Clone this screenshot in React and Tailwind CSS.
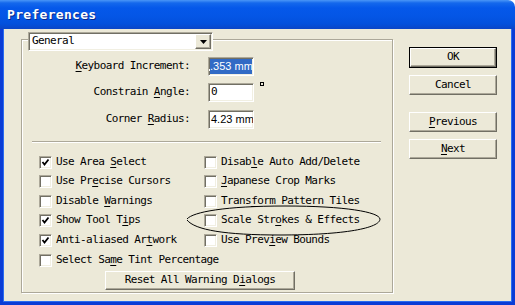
import React from 'react';

const font = { fontFamily: '"DejaVu Sans Mono", "Liberation Mono", monospace' };
const sans = { fontFamily: '"Liberation Sans", Arial, sans-serif' };

const sunken =
  'border border-t-[#aca899] border-l-[#aca899] border-b-white border-r-white shadow-[inset_1px_1px_0_#716f64,inset_-1px_-1px_0_#f1efe2]';
const raised =
  'border border-t-white border-l-white border-b-[#716f64] border-r-[#716f64] shadow-[inset_-1px_-1px_0_#aca899] bg-[#ece9d8]';

// label with one underlined mnemonic letter
function Mn({ text, at }) {
  if (at < 0) return <span>{text}</span>;
  return (
    <span>
      {text.slice(0, at)}
      <span className="underline underline-offset-2">{text[at]}</span>
      {text.slice(at + 1)}
    </span>
  );
}

function Check({ checked, label, at }) {
  return (
    <div className="flex items-center">
      <div className={`w-[13px] h-[13px] bg-white flex items-center justify-center ${sunken}`}>
        {checked && (
          <svg width="9" height="9" viewBox="0 0 9 9">
            <path d="M1.5 4 L3.5 6.5 L7.5 1.5" fill="none" stroke="#000" strokeWidth="1.8" />
          </svg>
        )}
      </div>
      <span className="ml-[4px] whitespace-nowrap">
        <Mn text={label} at={at} />
      </span>
    </div>
  );
}

function Btn({ label, at, def, className = '' }) {
  const inner = (
    <div className={`h-full flex items-center justify-center ${raised}`}>
      <Mn text={label} at={at} />
    </div>
  );
  return def ? (
    <div className={`border border-black ${className}`}>{inner}</div>
  ) : (
    <div className={className}>{inner}</div>
  );
}

function Field({ label, at, children }) {
  return (
    <div className="flex items-center h-[19px]">
      <div className="w-[169px] text-right pr-[1px]">
        <Mn text={label} at={at} />:
      </div>
      <div className="ml-[17px] flex items-start h-full">{children}</div>
    </div>
  );
}

const left = [
  ['Use Area Select', 9, true],
  ['Use Precise Cursors', 6, false],
  ['Disable Warnings', 8, false],
  ['Show Tool Tips', 11, true],
  ['Anti-aliased Artwork', 15, true],
  ['Select Same Tint Percentage', 9, false],
];
const right = [
  ['Disable Auto Add/Delete', 5, false],
  ['Japanese Crop Marks', 0, false],
  ['Transform Pattern Tiles', 5, false],
  ['Scale Strokes & Effects', 9, false],
  ['Use Preview Bounds', 8, false],
];

export default function App() {
  return (
    <div
      className="w-[515px] h-[305px] flex flex-col bg-white text-[11px] tracking-[-0.6px] text-black overflow-hidden"
      style={font}
    >
      {/* title bar */}
      <div className="h-[29px] shrink-0 rounded-tr-[7px] bg-[linear-gradient(to_bottom,#4a96f7_0px,#1468ec_3px,#0558ea_8px,#0456e6_16px,#0350dc_24px,#0b45c6_29px)] flex items-center pl-[7px]">
        <span className="text-white font-bold text-[13px] tracking-[0.3px] [text-shadow:1px_1px_0_#0a2a8a]">
          Preferences
        </span>
      </div>

      {/* window body */}
      <div className="flex-1 flex border-l-[3px] border-r-[3px] border-b-[3px] border-[#0a3cd6] bg-[#ece9d8]">
        <div className="flex-1 flex pl-[17px] pt-[10px] border-l border-r border-b border-[#2a6cf0]">
          {/* group box */}
          <div className="w-[372px] h-[254px] border border-[#aca899] shadow-[inset_1px_1px_0_#fff,1px_1px_0_#fff] flex flex-col">
            <div className={`-mt-[8px] ml-[6px] w-[185px] h-[19px] bg-white flex items-center ${sunken}`}>
              <span className="flex-1 pl-[3px]">General</span>
              <div className={`w-[16px] h-[15px] mr-[1px] flex items-center justify-center ${raised}`}>
                <svg width="7" height="4" viewBox="0 0 7 4">
                  <path d="M0 0 H7 L3.5 4 Z" fill="#000" />
                </svg>
              </div>
            </div>

            <div className="mt-[6px] flex flex-col">
              <Field label="Keyboard Increment" at={0}>
                <div className={`w-[46px] h-[19px] bg-[#316ac5] overflow-hidden flex items-center ${sunken}`}>
                  <div className="w-[1px] h-[2px] bg-white self-end mb-[4px]" />
                  <span className="text-white text-[11px] tracking-normal whitespace-nowrap" style={sans}>
                    .353 mm
                  </span>
                </div>
              </Field>
              <div className="h-[7px]" />
              <Field label="Constrain Angle" at={10}>
                <div className={`w-[46px] h-[19px] bg-white flex items-center pl-[2px] ${sunken}`}>0</div>
                <div className="ml-[6px] mt-[-1px] w-[4px] h-[4px] border border-black" />
              </Field>
              <div className="h-[8px]" />
              <Field label="Corner Radius" at={7}>
                <div className={`w-[46px] h-[19px] bg-white flex items-center pl-[2px] overflow-hidden ${sunken}`}>
                  <span className="text-[11px] tracking-normal whitespace-nowrap" style={sans}>
                    4.23 mm
                  </span>
                </div>
              </Field>
            </div>

            <div className="mt-[12px] ml-[10px] w-[349px] h-[2px] border-t border-[#aca899] border-b border-b-white" />

            <div className="relative mt-[9px] flex">
              <div className="ml-[17px] w-[165px] grid grid-rows-[20px_19px_20px_19px_20px_20px]">
                {left.map(([l, a, c]) => (
                  <Check key={l} label={l} at={a} checked={c} />
                ))}
              </div>
              <div className="grid grid-rows-[20px_19px_20px_19px_20px] content-start">
                {right.map(([l, a, c]) => (
                  <Check key={l} label={l} at={a} checked={c} />
                ))}
              </div>
              {/* hand-drawn ellipse annotation */}
              <svg className="absolute left-[163px] top-[52px]" width="198" height="34" viewBox="0 0 198 34">
                <path
                  d="M2 15 C8 8, 40 2, 100 2 C160 2, 194 8, 195 15 C195 24, 160 31, 95 31 C40 31, 10 26, 2 16"
                  fill="none"
                  stroke="#000"
                  strokeWidth="1"
                />
              </svg>
            </div>

            <Btn label="Reset All Warning Dialogs" at={19} className="mt-[1px] ml-[83px] w-[190px] h-[19px]" />
          </div>

          {/* right buttons */}
          <div className="ml-[16px] mt-[8px] flex flex-col">
            <Btn label="OK" at={-1} def className="w-[88px] h-[21px]" />
            <Btn label="Cancel" at={-1} className="mt-[7px] w-[88px] h-[20px]" />
            <Btn label="Previous" at={0} className="mt-[17px] w-[88px] h-[20px]" />
            <Btn label="Next" at={0} className="mt-[7px] w-[88px] h-[20px]" />
          </div>
        </div>
      </div>
    </div>
  );
}
